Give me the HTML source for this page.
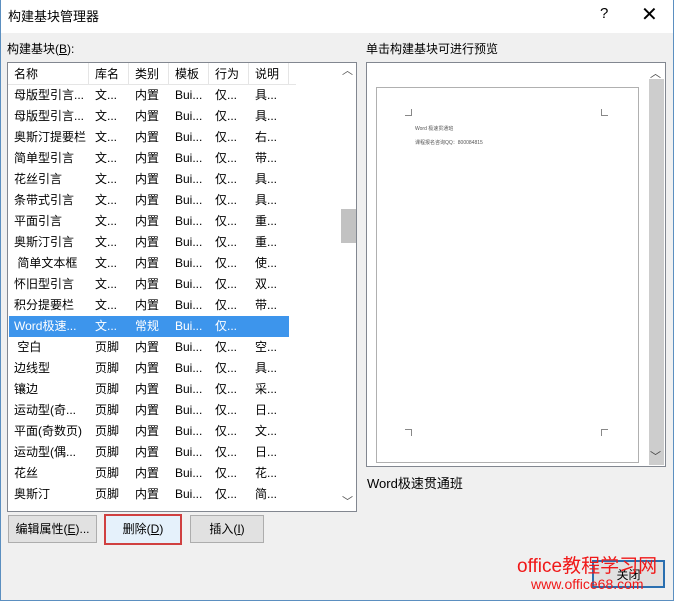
<!DOCTYPE html>
<html><head><meta charset="utf-8"><style>
*{margin:0;padding:0;box-sizing:border-box}
body{width:674px;height:601px;background:#f0f0f0;font-family:"Liberation Sans","Noto Sans CJK SC",sans-serif;font-size:12px;color:#000;position:relative;overflow:hidden}
.abs{position:absolute}
#title{left:0;top:0;width:674px;height:33px;background:#fff}
#list{left:7px;top:62px;width:350px;height:450px;background:#fff;border:1px solid #828790}
.row{position:absolute;left:1px;height:21px;width:280px;line-height:21px;white-space:nowrap}
.row span{position:absolute;top:0}
.sel{background:#3d95ec;color:#fff}
.btn{position:absolute;height:28px;background:#e1e1e1;border:1px solid #adadad;text-align:center;line-height:26px}
</style></head><body>
<div id="title" class="abs"></div>
<div class="abs" style="left:8px;top:6px;font-size:13px">构建基块管理器</div>
<div class="abs" style="left:600px;top:5px;font-size:15px">?</div>
<div class="abs" style="left:641px;top:2px;font-size:20px">✕</div>
<div class="abs" style="left:0;top:0;width:1px;height:601px;background:#5b8fc0"></div>
<div class="abs" style="left:673px;top:0;width:1px;height:601px;background:#5b8fc0"></div>
<div class="abs" style="left:0;top:600px;width:674px;height:1px;background:#5b8fc0"></div>
<div class="abs" style="left:7px;top:40px">构建基块(<u>B</u>):</div>
<div class="abs" style="left:366px;top:40px">单击构建基块可进行预览</div>
<div id="list" class="abs">
<div class="abs" style="left:0;top:0;width:288px;height:22px;border-bottom:1px solid #e5e5e5"></div>
<div class="abs" style="left:80px;top:0;width:1px;height:22px;background:#e5e5e5"></div>
<div class="abs" style="left:120px;top:0;width:1px;height:22px;background:#e5e5e5"></div>
<div class="abs" style="left:160px;top:0;width:1px;height:22px;background:#e5e5e5"></div>
<div class="abs" style="left:200px;top:0;width:1px;height:22px;background:#e5e5e5"></div>
<div class="abs" style="left:240px;top:0;width:1px;height:22px;background:#e5e5e5"></div>
<div class="abs" style="left:280px;top:0;width:1px;height:22px;background:#e5e5e5"></div>
<div id="rows"></div>
<div class="abs" style="left:332px;top:0;width:16px;height:448px;background:#fff"></div>
<div class="abs" style="left:334px;top:-1px;font-size:11px;color:#555">︿</div>
<div class="abs" style="left:333px;top:146px;width:15px;height:34px;background:#c2c2c2"></div>
<div class="abs" style="left:334px;top:430px;font-size:11px;color:#555">﹀</div>
</div>
<div class="abs" style="left:366px;top:62px;width:300px;height:405px;background:#fff;border:1px solid #828790">
<div class="abs" style="left:9px;top:24px;width:263px;height:376px;border:1px solid #b0b0b0;background:#fff"></div>
<div class="abs" style="left:282px;top:16px;width:15px;height:386px;background:#cdcdcd"></div>
<div class="abs" style="left:283px;top:2px;font-size:11px;color:#444">︿</div>
<div class="abs" style="left:283px;top:385px;font-size:11px;color:#444">﹀</div>
<div class="abs" style="left:38px;top:46px;width:7px;height:7px;border-right:1px solid #888;border-bottom:1px solid #888"></div>
<div class="abs" style="left:234px;top:46px;width:7px;height:7px;border-left:1px solid #888;border-bottom:1px solid #888"></div>
<div class="abs" style="left:38px;top:366px;width:7px;height:7px;border-right:1px solid #888;border-top:1px solid #888"></div>
<div class="abs" style="left:234px;top:366px;width:7px;height:7px;border-left:1px solid #888;border-top:1px solid #888"></div>
<div class="abs" style="left:48px;top:62px;font-size:5px;color:#555">Word 极速贯通班</div>
<div class="abs" style="left:48px;top:76px;font-size:5px;color:#555">课程报名咨询QQ：800084815</div>
</div>
<div class="abs" style="left:367px;top:473px;font-size:13px">Word极速贯通班</div>
<div class="btn" style="left:8px;top:515px;width:89px">编辑属性(<u>E</u>)...</div>
<div class="btn" style="left:104px;top:514px;width:78px;height:31px;border:2px solid #d04040;background:#e5f1fb;line-height:27px">删除(<u>D</u>)</div>
<div class="btn" style="left:190px;top:515px;width:74px">插入(<u>I</u>)</div>
<div class="btn" style="left:592px;top:560px;width:73px;border:2px solid #2a6fb0">关闭</div>
<div class="abs" style="left:517px;top:551px;font-size:19px;color:#f01818;white-space:nowrap">office教程学习网</div>
<div class="abs" style="left:531px;top:576px;font-size:14px;color:#f01818">www.office68.com</div>
<script>
var d=[["名称","库名","类别","模板","行为","说明"],
["母版型引言...","文...","内置","Bui...","仅...","具..."],
["母版型引言...","文...","内置","Bui...","仅...","具..."],
["奥斯汀提要栏","文...","内置","Bui...","仅...","右..."],
["简单型引言","文...","内置","Bui...","仅...","带..."],
["花丝引言","文...","内置","Bui...","仅...","具..."],
["条带式引言","文...","内置","Bui...","仅...","具..."],
["平面引言","文...","内置","Bui...","仅...","重..."],
["奥斯汀引言","文...","内置","Bui...","仅...","重..."],
[" 简单文本框","文...","内置","Bui...","仅...","使..."],
["怀旧型引言","文...","内置","Bui...","仅...","双..."],
["积分提要栏","文...","内置","Bui...","仅...","带..."],
["Word极速...","文...","常规","Bui...","仅...",""],
[" 空白","页脚","内置","Bui...","仅...","空..."],
["边线型","页脚","内置","Bui...","仅...","具..."],
["镶边","页脚","内置","Bui...","仅...","采..."],
["运动型(奇...","页脚","内置","Bui...","仅...","日..."],
["平面(奇数页)","页脚","内置","Bui...","仅...","文..."],
["运动型(偶...","页脚","内置","Bui...","仅...","日..."],
["花丝","页脚","内置","Bui...","仅...","花..."],
["奥斯汀","页脚","内置","Bui...","仅...","简..."]];
var xs=[5,86,126,166,206,246],h="";
d.forEach(function(r,i){h+='<div class="row'+(i==12?' sel':'')+'" style="top:'+(i*21+1)+'px">';
r.forEach(function(c,j){h+='<span style="left:'+xs[j]+'px">'+c.replace(/ /g,'&nbsp;')+'</span>'});h+='</div>'});
document.getElementById('rows').innerHTML=h;
</script>
</body></html>
